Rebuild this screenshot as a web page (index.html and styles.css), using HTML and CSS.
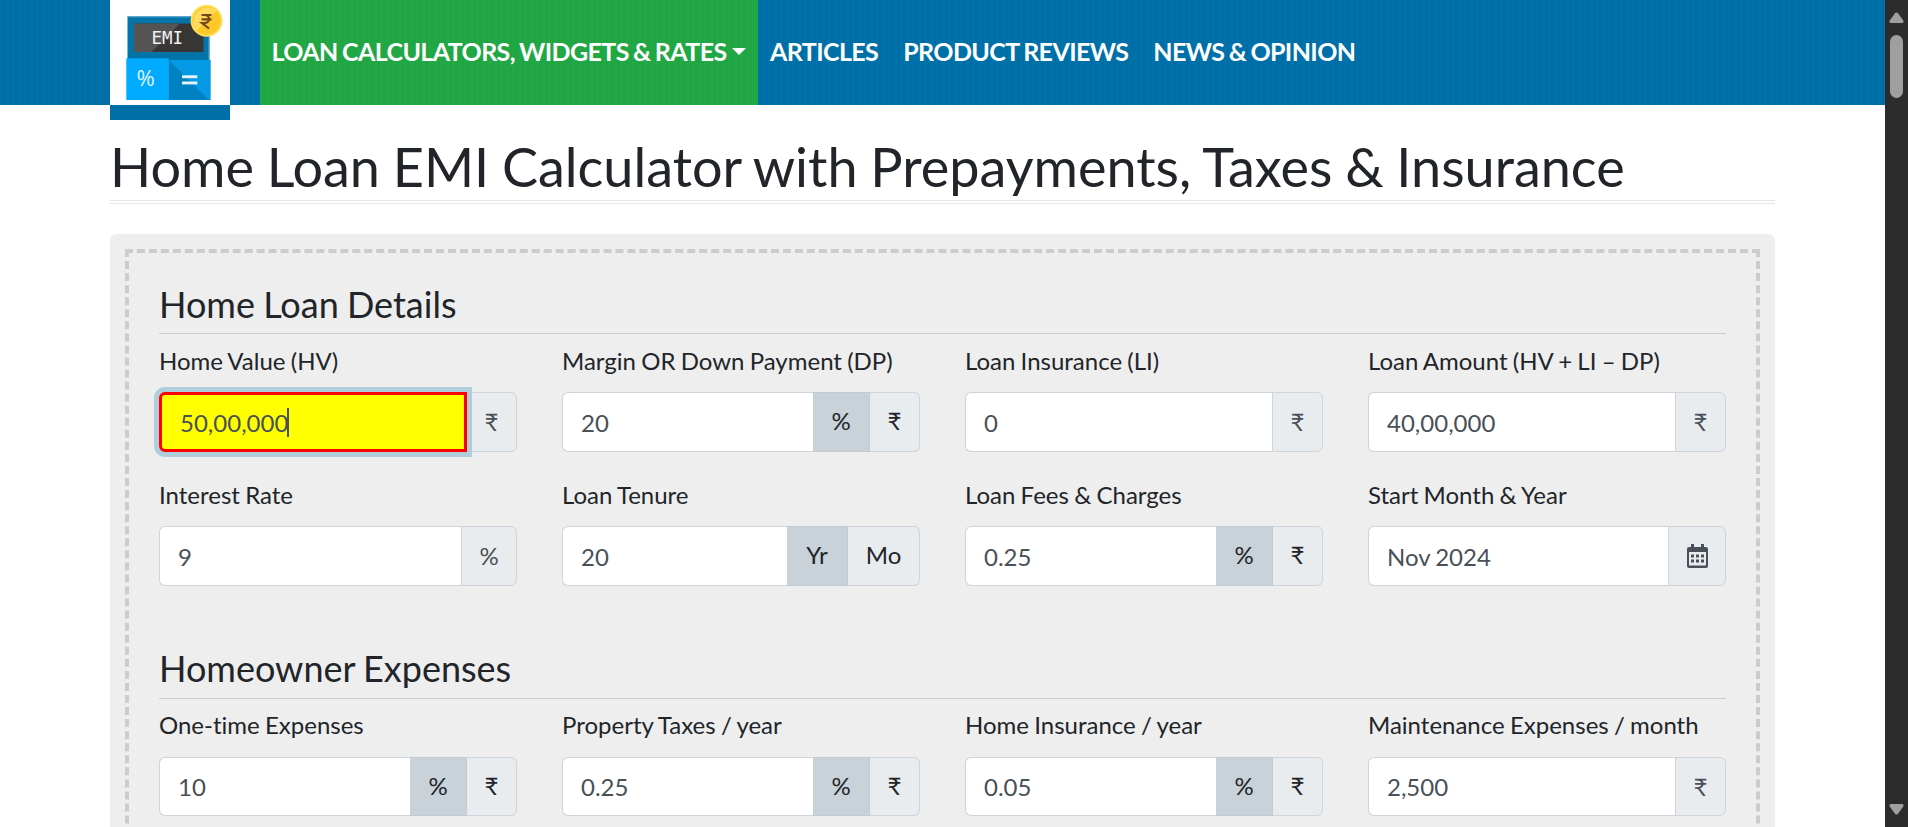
FILE: index.html
```html
<!DOCTYPE html>
<html lang="en">
<head>
<meta charset="utf-8">
<title>Home Loan EMI Calculator</title>
<link rel="stylesheet" href="styles.css">
</head>
<body>
<div class="page">
  <header class="navbar">
    <a class="logo">
      <svg viewBox="0 0 120 104" width="120" height="104">
        <rect x="17.5" y="16.5" width="82" height="44" fill="#0274a8"/>
        <path d="M17.5 17H99.500" stroke="#3b95c3" fill="none"/>
        <path d="M99 17V59" stroke="#64afd6" fill="none"/>
        <rect x="24" y="23.500" width="69.500" height="28.500" fill="#383635"/>
        <path d="M24 23.500H70L41.500 52H24Z" fill="#535453"/>
        <rect x="16.300" y="58.300" width="42.500" height="41.700" fill="#00aaff"/>
        <rect x="58.700" y="60" width="42" height="40" fill="#0699e4"/>
        <path d="M58.700 60L99 100H58.700Z" fill="#0081c1"/>
        <rect x="72" y="75.300" width="15.300" height="2.900" fill="#e6f4fc"/>
        <rect x="72" y="81.500" width="15.300" height="2.900" fill="#e6f4fc"/>
        <text class="logo-emi" x="41.500" y="43.600">EMI</text>
        <text class="logo-pct" x="26.600" y="86">%</text>
        <circle cx="96.600" cy="20.700" r="16" fill="#ffdf60"/>
        <circle cx="96.600" cy="20.700" r="14.200" fill="#fcc928"/>
        <path d="M106.600 10.700A14.200 14.200 0 0 0 86.600 30.700Z" fill="#ffda5c"/>
        <path d="M91.500 15H101.500M91.500 19.300H101.500M91.500 15H94.500C100.500 15 100.500 23 94.500 23H92L99 28.500" fill="none" stroke="#75471f" stroke-width="2.200"/>
      </svg>
    </a>
    <nav class="menu">
      <a class="menu-item active">LOAN CALCULATORS, WIDGETS &amp; RATES<span class="caret"></span></a>
      <a class="menu-item">ARTICLES</a>
      <a class="menu-item">PRODUCT REVIEWS</a>
      <a class="menu-item">NEWS &amp; OPINION</a>
    </nav>
  </header>
  <main class="container">
    <h1>Home Loan EMI Calculator with Prepayments, Taxes &amp; Insurance</h1>
    <div class="panel">
      <form class="calculator">
        <h2>Home Loan Details</h2>
        <div class="fields">
          <div class="field"><label>Home Value (HV)</label>
            <div class="group"><div class="input focused">50,00,000<i class="cursor"></i></div><span class="addon w-rs">₹</span></div></div>
          <div class="field"><label>Margin OR Down Payment (DP)</label>
            <div class="group"><div class="input">20</div><span class="option w-pct on">%</span><span class="option w-rs">₹</span></div></div>
          <div class="field"><label>Loan Insurance (LI)</label>
            <div class="group"><div class="input">0</div><span class="addon w-rs">₹</span></div></div>
          <div class="field"><label>Loan Amount (HV + LI – DP)</label>
            <div class="group"><div class="input">40,00,000</div><span class="addon w-rs">₹</span></div></div>
          <div class="field"><label>Interest Rate</label>
            <div class="group"><div class="input">9</div><span class="addon w-pct">%</span></div></div>
          <div class="field"><label>Loan Tenure</label>
            <div class="group"><div class="input">20</div><span class="option w-yr on">Yr</span><span class="option w-mo">Mo</span></div></div>
          <div class="field"><label>Loan Fees &amp; Charges</label>
            <div class="group"><div class="input">0.25</div><span class="option w-pct on">%</span><span class="option w-rs">₹</span></div></div>
          <div class="field"><label>Start Month &amp; Year</label>
            <div class="group"><div class="input">Nov 2024</div><span class="addon w-cal">
              <svg viewBox="0 0 21 24" width="21" height="24" fill="#495057">
                <path fill-rule="evenodd" d="M4 0h3v3h7V0h3v3h2a2 2 0 0 1 2 2v17a2 2 0 0 1-2 2H2a2 2 0 0 1-2-2V5a2 2 0 0 1 2-2h2zM2 8v13.500h17V8z"/>
                <path d="M4 10.500h3v3H4zM9 10.500h3v3H9zM14 10.500h3v3h-3zM4 15.500h3v3H4zM9 15.500h3v3H9zM14 15.500h3v3h-3z"/>
              </svg></span></div></div>
        </div>
        <h2 class="second">Homeowner Expenses</h2>
        <div class="fields expenses">
          <div class="field"><label>One-time Expenses</label>
            <div class="group"><div class="input">10</div><span class="option w-pct on">%</span><span class="option w-rs">₹</span></div></div>
          <div class="field"><label>Property Taxes / year</label>
            <div class="group"><div class="input">0.25</div><span class="option w-pct on">%</span><span class="option w-rs">₹</span></div></div>
          <div class="field"><label>Home Insurance / year</label>
            <div class="group"><div class="input">0.05</div><span class="option w-pct on">%</span><span class="option w-rs">₹</span></div></div>
          <div class="field"><label>Maintenance Expenses / month</label>
            <div class="group"><div class="input">2,500</div><span class="addon w-rs">₹</span></div></div>
        </div>
      </form>
    </div>
  </main>
</div>
<aside class="scrollbar">
  <svg viewBox="0 0 15 12" width="15" height="12" fill="#9f9f9f"><path d="M6 1.300Q7.500-.5 9 1.300L14.300 8.500Q15 11 13 11H2Q0 11 .7 8.500Z"/></svg>
  <div class="thumb"></div>
  <svg class="down" viewBox="0 0 15 12" width="15" height="12" fill="#9f9f9f"><path d="M6 10.700Q7.500 12.500 9 10.700L14.300 3.500Q15 1 13 1H2Q0 1 .7 3.500Z"/></svg>
</aside>
</body>
</html>
```
FILE: styles.css
```css
* { box-sizing: border-box; }
html, body { height: 100%; }
body {
  margin: 0;
  display: flex;
  overflow: hidden;
  background: #fff;
  color: #212529;
  font: 24px/36px Lato, sans-serif;
  font-variant-ligatures: none;
}
.page { flex: 1; height: 827px; overflow: hidden; }
.navbar {
  display: flex;
  height: 105px;
  padding-left: 110px;
  background: repeating-linear-gradient(90deg, #0071a9 0 3px, #006fa7 3px 6px, #0070a8 6px 10px, #006ea6 10px 12px);
}
.logo {
  width: 120px;
  height: 120px;
  flex: none;
  background: #fff;
  border-bottom: 15px solid #006fa7;
}
.logo svg { display: block; }
.logo-emi { font: 17.500px "DejaVu Sans Mono", monospace; fill: #f1f1f1; }
.logo-pct { font: 22px "Noto Sans", sans-serif; fill: #d7f0ff; }
.menu { display: flex; margin-left: 29.500px; }
.menu-item {
  display: flex;
  align-items: center;
  padding: 0 12px 3px;
  color: #fff;
  font-size: 25px;
  font-weight: 700;
  letter-spacing: -.6px;
  word-spacing: -1.200px;
  white-space: nowrap;
}
.menu-item + .menu-item { padding-right: 13px; }
.active {
  width: 498.500px;
  background: repeating-linear-gradient(90deg, #22a845 0 3px, #21a644 3px 6px, #21a745 6px 10px, #20a543 10px 12px);
}
.caret {
  margin-left: auto;
  border: 7px solid transparent;
  border-top: 7px solid #fff;
  border-bottom: 0;
}
.container { width: 1665px; margin-left: 110px; }
h1 {
  height: 96px;
  margin: 0;
  padding-top: 29px;
  font-size: 54px;
  font-weight: 400;
  line-height: 65px;
  word-spacing: -1.100px;
  white-space: nowrap;
  border-bottom: 1px solid #e5e5e5;
  box-shadow: 0 2px #fff, 0 3px #e5e5e5;
}
.panel {
  height: 700px;
  margin-top: 33px;
  padding: 15px;
  border-radius: 6px;
  background: #eee;
}
.calculator { height: 900px; padding: 30px; border: 4px dashed #ccc; }
h2 {
  height: 51px;
  margin: 0 0 9px;
  border-bottom: 1px solid #ccc;
  font-size: 36px;
  font-weight: 400;
  line-height: 43px;
  word-spacing: -1px;
}
h2.second { height: 52px; margin: 61px 0 8px; }
.fields {
  display: grid;
  grid-template-columns: repeat(4, 358px);
  column-gap: 45px;
  row-gap: 25px;
}
label { display: block; margin-bottom: 13px; height: 36px; white-space: nowrap; word-spacing: -.9px; }
.group { display: flex; height: 60px; }
.expenses label { margin-bottom: 14px; }
.expenses .group { height: 59px; }
.input {
  flex: 1;
  display: flex;
  align-items: center;
  padding: 1px 0 0 18px;
  border: 1px solid #ced4da;
  border-right: 0;
  border-radius: 6px 0 0 6px;
  background: #fff;
  color: #495057;
  word-spacing: -1px;
}
.focused {
  padding-top: 2px;
  border: 3px solid red;
  background: #ff0;
  box-shadow: 0 0 0 5px #b0cddc;
  z-index: 1;
}
.cursor { width: 2px; height: 29px; margin: -2px 0 0 -1px; background: #495057; }
.addon, .option {
  display: flex;
  align-items: center;
  justify-content: center;
  border: 1px solid #ced4da;
  border-left: 0;
  background: #e9ecef;
  color: #495057;
}
.option { padding-bottom: 2px; color: #212529; }
.group > :last-child { border-radius: 0 6px 6px 0; }
.addon { border-left: 1px solid #ced4da; margin-left: -1px; }
.on { background: #c9d1d9; border-color: #c3ccd4; }
.w-rs { width: 50px; }
.addon.w-rs { width: 51px; }
.w-pct { width: 57px; }
.addon.w-pct { width: 56px; }
.w-yr { width: 61px; }
.w-mo { width: 72px; }
.w-cal { width: 58px; }
.scrollbar {
  display: flex;
  flex-direction: column;
  align-items: center;
  width: 23px;
  height: 827px;
  padding: 12px 0;
  background: #2c2c2c;
}
.thumb { width: 13px; height: 63px; margin-top: 11px; border-radius: 7px; background: #9f9f9f; }
.down { margin-top: auto; }
```
